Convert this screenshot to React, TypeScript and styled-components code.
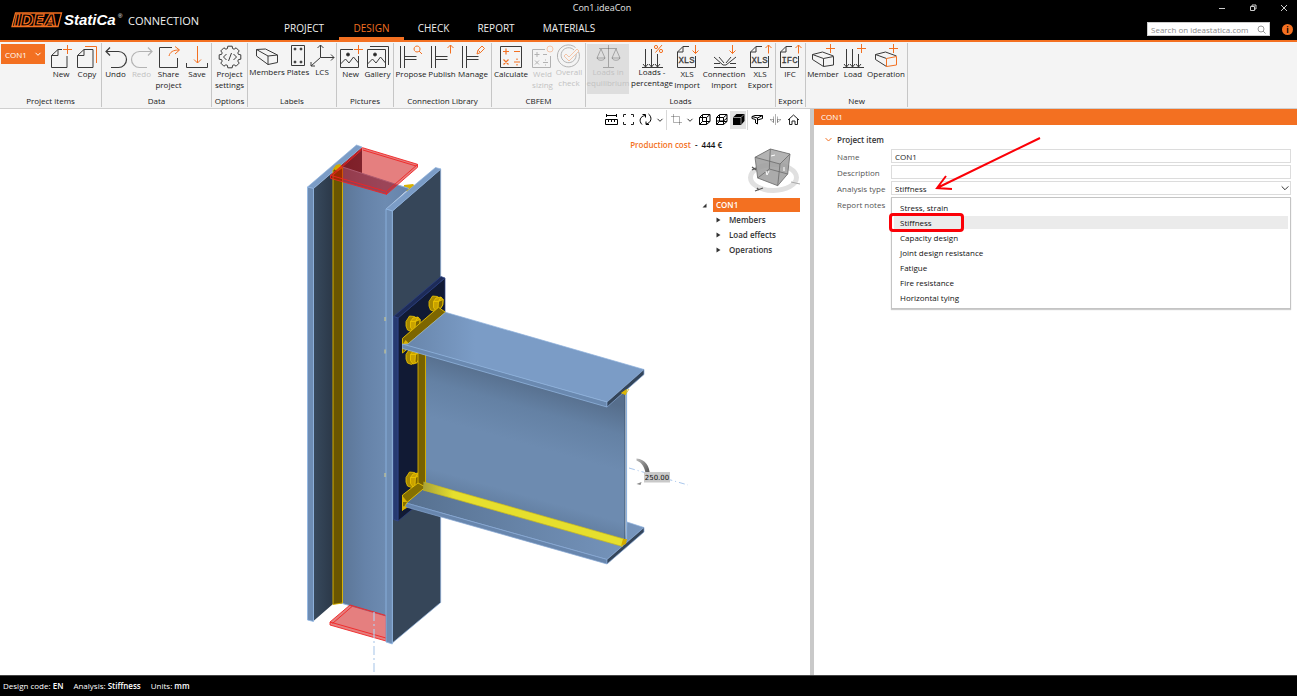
import React from 'react';
import styled, { createGlobalStyle } from 'styled-components';

const ORANGE = '#f37021';
const INK = '#3a3a3a';
const RED = '#fb0007';

const GlobalStyle = createGlobalStyle`
  * { box-sizing: border-box; }
  body { margin: 0; background: #fff; }
  body, button, input, select {
    font-family: 'Open Sans', 'Noto Sans', sans-serif;
    font-size: 8px;
    line-height: 11px;
    color: #1a1a1a;
  }
  button { border: 0; padding: 0; margin: 0; background: none; cursor: pointer; }
  ul { list-style: none; margin: 0; padding: 0; }
  svg { display: block; overflow: visible; }
`;

const Page = styled.div`
  display: flex;
  flex-direction: column;
  min-height: 100vh;
`;

/* ---------- header ---------- */
const Header = styled.header`
  display: grid;
  grid-template-columns: 269px 1fr 362px;
  height: 42px;
  background: #000;
  border-bottom: 2px solid ${ORANGE};
  color: #fff;
`;
const Brand = styled.div`
  display: flex;
  align-items: center;
  gap: 6px;
  padding-left: 11px;
  font-size: 11px;
  color: #f0f0f0;
`;
const Center = styled.div`
  display: flex;
  flex-direction: column;
  justify-content: space-between;
`;
const DocTitle = styled.div`
  text-align: center;
  font-size: 9px;
  line-height: 16px;
  color: #e4e4e4;
`;
const Tabs = styled.nav`
  display: flex;
`;
const Tab = styled.a<{ $active?: boolean; $w: number }>`
  width: ${p => p.$w}px;
  height: 20px;
  text-align: center;
  text-decoration: none;
  font-size: 10px;
  line-height: 17px;
  color: ${p => (p.$active ? ORANGE : '#eee')};
  border-bottom: 3px solid ${p => (p.$active ? ORANGE : 'transparent')};
`;
const HeaderRight = styled.div`
  display: flex;
  flex-direction: column;
  align-items: flex-end;
`;
const WindowButtons = styled.div`
  display: flex;
  gap: 19px;
  height: 22px;
  padding: 2px 7px 0 0;
`;
const WindowButton = styled.button`
  width: 12px;
  height: 12px;
`;
const SearchRow = styled.div`
  display: flex;
  align-items: center;
  gap: 12px;
  padding-right: 4px;
`;
const SearchBox = styled.label`
  display: flex;
  align-items: center;
  width: 123px;
  height: 14px;
  background: #fff;
  border: 1px solid #ccc;
  padding: 0 3px;
  input {
    flex: 1;
    min-width: 0;
    border: 0;
    padding: 0;
    outline: 0;
    background: none;
  }
  input::placeholder { color: #8a8a8a; opacity: 1; }
`;
const InfoButton = styled.button`
  width: 11px;
  height: 11px;
  border-radius: 50%;
  background: ${ORANGE};
  color: #000;
  font-weight: 700;
  line-height: 11px;
`;

/* ---------- ribbon ---------- */
const Ribbon = styled.div`
  display: flex;
  height: 67px;
  padding: 1px 0;
  background: #f4f4f4;
  border-bottom: 1px solid #cfcfcf;
`;
const Group = styled.section<{ $w: number }>`
  display: flex;
  flex-direction: column;
  justify-content: space-between;
  flex: none;
  width: ${p => p.$w}px;
  border-right: 1px solid #c6c6c6;
`;
const GroupButtons = styled.div<{ $pad?: number }>`
  display: flex;
  padding: 1px 0 0 ${p => p.$pad || 0}px;
`;
const GroupName = styled.div`
  text-align: center;
  white-space: nowrap;
  line-height: 13px;
`;
const Tool = styled.button<{ $w: number; $tight?: boolean; $shade?: boolean }>`
  display: flex;
  flex-direction: column;
  align-items: center;
  flex: none;
  width: ${p => p.$w}px;
  height: 50px;
  white-space: nowrap;
  background: ${p => (p.$shade ? '#dedede' : 'none')};
  svg { height: ${p => (p.$tight ? 22 : 24)}px; width: 28px; flex: none; }
  &:disabled { color: #c2c2c2; cursor: default; }
`;
const ItemPicker = styled.button`
  display: flex;
  align-items: center;
  justify-content: space-between;
  flex: none;
  width: 44px;
  height: 20px;
  margin: 0 3px 0 1px;
  padding: 0 4px;
  background: ${ORANGE};
  color: #fff;
`;

/* ---------- work area ---------- */
const Work = styled.main`
  display: grid;
  grid-template-columns: minmax(0, 810fr) 4px minmax(0, 483fr);
  flex: 1;
`;
const Viewport = styled.section`
  display: grid;
  background: #fff;
  overflow: hidden;
  > * { grid-area: 1 / 1; }
`;
const Splitter = styled.div`
  background: #c9c9c9;
`;
const Overlay = styled.div`
  display: flex;
  flex-direction: column;
  align-items: flex-end;
  justify-self: end;
  align-self: start;
`;
const ViewTools = styled.div`
  display: flex;
  align-items: center;
  height: 21px;
  padding-right: 8px;
`;
const ViewTool = styled.button<{ $w: number; $on?: boolean }>`
  display: flex;
  justify-content: center;
  align-items: center;
  width: ${p => p.$w}px;
  height: 18px;
  background: ${p => (p.$on ? '#e3e3e3' : 'none')};
`;
const Divider = styled.i`
  width: 1px;
  height: 20px;
  margin: 0 1px;
  background: #d8d8d8;
`;
const CostRow = styled.div`
  display: flex;
  gap: 25px;
  padding: 8px 9px 0 0;
  font-weight: 600;
  line-height: 13px;
  color: #111;
  em { font-style: normal; color: ${ORANGE}; margin-right: 2px; }
  svg { margin-top: 9px; }
`;
const Tree = styled.ul`
  width: 98px;
  margin: -3px 10px 0 0;
  font-weight: 600;
  line-height: 15px;
  color: #333;
`;
const TreeRoot = styled.li`
  display: flex;
  align-items: center;
  gap: 6px;
  span { flex: 1; padding-left: 3px; background: ${ORANGE}; color: #fff; line-height: 14px; }
`;
const TreeRow = styled.li`
  display: flex;
  align-items: center;
  gap: 8px;
  padding-left: 14px;
`;

/* ---------- properties ---------- */
const Panel = styled.section`
  background: #fff;
`;
const PanelTitle = styled.h2`
  margin: 0;
  padding-left: 7px;
  font-size: 8px;
  font-weight: 400;
  line-height: 16px;
  color: #fff;
  background: ${ORANGE};
`;
const Form = styled.form`
  padding: 7px 6px 0 11px;
`;
const SectionTitle = styled.h3`
  display: flex;
  align-items: center;
  gap: 5px;
  margin: 0;
  font-size: 8px;
  font-weight: 600;
  line-height: 15px;
  color: #333;
`;
const Field = styled.div`
  position: relative;
  display: grid;
  grid-template-columns: 54px 1fr;
  align-items: center;
  height: 16px;
  margin-left: 12px;
  white-space: nowrap;
  label { color: #555; }
  &:first-of-type { margin-top: 1px; }
`;
const TextInput = styled.input`
  width: 100%;
  height: 14px;
  padding: 0 3px;
  border: 1px solid #dcdcdc;
  outline: 0;
  background: #fff;
`;
const SelectBox = styled.div`
  position: relative;
  svg { position: absolute; right: 2px; top: 3px; pointer-events: none; }
`;
const Select = styled.select`
  display: block;
  width: 100%;
  height: 14px;
  padding: 0 3px;
  border: 1px solid #dcdcdc;
  border-radius: 0;
  appearance: none;
  background: #fff;
`;
const Menu = styled.ul`
  position: absolute;
  z-index: 1;
  top: 16px;
  left: 0;
  right: 0;
  padding: 2px;
  background: #fff;
  border: 1px solid #c4c4c4;
  box-shadow: 0 1px 1px #ccc;
`;
const Option = styled.li<{ $on?: boolean }>`
  position: relative;
  padding-left: 6px;
  line-height: 13px;
  margin: 1px 0 2px;
  color: #111;
  background: ${p => (p.$on ? '#ebebeb' : 'none')};
`;
const RedFrame = styled.span`
  position: absolute;
  left: -5px;
  top: -3px;
  width: 75px;
  height: 19px;
  border: 3px solid ${RED};
  border-radius: 4px;
`;
const Arrow = styled.svg`
  && {
    position: absolute;
    right: auto;
    left: 44px;
    top: -46px;
  }
`;

const Status = styled.footer`
  display: flex;
  gap: 10px;
  height: 21px;
  padding-left: 3px;
  background: #000;
  border-top: 1px solid #444;
  color: #fff;
  line-height: 20px;
  b { font-weight: 600; }
`;

/* ---------- icons ---------- */
type IconProps = { children: React.ReactNode; faded?: boolean };
const Icon = ({ children, faded }: IconProps) => (
  <svg viewBox="0 0 28 24" width="28" height="24" preserveAspectRatio="xMidYMin slice" fill="none" stroke={INK} strokeWidth="1" opacity={faded ? 0.35 : 1} aria-hidden="true">
    {children}
  </svg>
);
const O = ({ d }: { d: string }) => <path d={d} stroke={ORANGE} />;
const plus = (x: number, y: number) => `M${x - 4} ${y + 0.5}h9M${x + 0.5} ${y - 4}v9`;
const DOWN = 'M22.500 1v8.500M19.500 6.500l3 3 3-3';
const UP = 'M22.500 9.500V1M19.500 4l3-3 3 3';

const gear = (() => {
  const pts: string[] = [];
  for (let i = 0; i < 8; i++) {
    const a = (i * Math.PI) / 4;
    [[-0.3, 8.8], [-0.2, 11], [0.2, 11], [0.3, 8.8]].forEach(([o, r]) =>
      pts.push(`${(14 + r * Math.cos(a + o)).toFixed(1)} ${(13 + r * Math.sin(a + o)).toFixed(1)}`));
  }
  return `M${pts.join('L')}Z`;
})();

const DOC = 'M15 5.500h-4l-6.500 6v12h15.500V12M11 5.500v6H4.500';
const LINES = 'M3.500 2v22M7.500 2v22M7.500 12.500h12M7.500 15.500h12';
const LOADS = 'M4 23.500h21M7.500 5v18M13.500 5v18M19.500 10v13M5 20l2.500 3 2.500-3M11 20l2.500 3 2.500-3M17 20l2.500 3 2.500-3';

const FileIcon = ({ text, arrow }: { text: string; arrow: string }) => (
  <Icon>
    <path d="M16 2.500h-6L4.500 8v15.500h18V12M10 2.500V8H4.500" />
    <text x="13.500" y="19" textAnchor="middle" fontFamily="Liberation Mono" fontSize="9" fill={INK} stroke={INK} strokeWidth=".3">{text}</text>
    <O d={arrow} />
  </Icon>
);
const BeamBox = ({ front = INK }: { front?: string }) => (
  <>
    <path d="M3.500 10.500l10-2.500 11 4M3.500 10.500v5l11 7M3.500 10.500l11 4" />
    <path d="M14.500 14.500l10-2v8.500l-10 1.500z" stroke={front} />
  </>
);
const icons = {
  newDoc: <Icon><path d={DOC} /><O d={plus(20, 5)} /></Icon>,
  copy: <Icon><path d="M11 5.500h9v18H4.500v-12zM11 5.500v6H4.500" /><O d="M12 2.500h11.500V19" /></Icon>,
  undo: <Icon><path strokeWidth="1.200" d="M4 7.500h12.500a8 8 0 0 1 0 16H9M8 3.500l-4 4 4 4" /></Icon>,
  redo: <Icon faded><path strokeWidth="1.200" d="M24 7.500H11.500a8 8 0 0 0 0 16H19M20 3.500l4 4-4 4" /></Icon>,
  share: <Icon><path d="M17 3.500H4.500v20h18V14" /><O d="M14 12c1-4 4-6 10-6M20 2.500l4.500 3.500-4.500 4" /></Icon>,
  save: <Icon><path d="M3.500 19v4.500h21V19" /><O d="M14.500 2v17M11 15.500l3.500 3.500 3.500-3.500" /></Icon>,
  gear: <Icon><path d={gear} strokeLinejoin="round" /><path d="M10.500 10L7.500 13l3 3M17.500 10l3 3-3 3M15.500 9l-3 8" /></Icon>,
  members: <Icon><path d="M3.500 5.500l9-.500L24.500 11v7.500l-9.500 2-11.500-8.500zM3.500 5.500L15 12v8.500M15 12l9.500-1" /></Icon>,
  plates: <Icon><path d="M7.500 1.500h13v20h-13z" />{[[11, 5], [17, 5], [11, 18], [17, 18]].map(([x, y]) => <circle key={`${x}-${y}`} cx={x} cy={y} r="1" fill={INK} />)}</Icon>,
  lcs: <Icon><path d="M12.500 1v12.500H26M12.500 13.500L3 22M9.500 4l3-3 3 3M23 10.500l3 3-3 3M3 18v4h4" /></Icon>,
  picNew: <Icon><path d="M16 5.500H3.500v18h18V12M3.500 20l5-5 3.500 4 4.500-6 5 6" /><circle cx="11" cy="10.500" r="1.500" fill="#222" /><O d={plus(21, 5)} /></Icon>,
  gallery: <Icon><path d="M3.500 5.500h18v18h-18zM6 2.500h18.500V21M3.500 20l5-5 3.500 4 4.500-6 5 6" /><circle cx="11" cy="10.500" r="1.500" fill="#222" /></Icon>,
  propose: <Icon><path d={LINES} /><O d="M20 2a3 3 0 1 0 .1 0M22 7l3 3" /></Icon>,
  publish: <Icon><path d={LINES} /><O d={UP} /></Icon>,
  manage: <Icon><path d={LINES} /><O d="M18 10l1-4 4-4 2.500 2.500-4 4zM19.500 6.500l2 2" /></Icon>,
  calculate: <Icon><path d="M3.500 2.500h21v21h-21z" /><path stroke={ORANGE} strokeWidth="1.200" d="M6 7.500h6M9 4.500v6M17 7.500h6M6.500 15.500l5 5M11.500 15.500l-5 5M17 18h6M20 14.500v1.500M20 20v1.500" /></Icon>,
  weld: <Icon faded><path d="M16 5.500H3.500v18h18V12M5.500 10.500h5M8 8v5M14 10.500h4M6 16.500l4 4M10 16.500l-4 4M14 18.500h5M16.500 15.500v1M16.500 20.500v1" /><circle cx="21" cy="5" r="3" stroke={ORANGE} /></Icon>,
  overall: <Icon faded><path d="M23.500 7.500a11 11 0 1 1-3-4M21 10a7.500 7.500 0 1 1-2-4" /><path stroke={ORANGE} d="M9 12l2-2 3 3 8-8 2 2L14 17z" /></Icon>,
  scales: <Icon faded><path d="M14.500 1v22M9 23.500h11M5 4.500h18M7 5l-4 9h8zM22 5l-4 9h8zM3 14c1 3 7 3 8 0M18 14c1 3 7 3 8 0" /></Icon>,
  loadsPct: <Icon><path d={LOADS} /><O d="M17.500 8.500L24 1" /><circle cx="18" cy="3" r="1.600" stroke={ORANGE} /><circle cx="23" cy="7" r="1.600" stroke={ORANGE} /></Icon>,
  connImport: <Icon><path d="M4 23.500h22M4 19.500h6M20 19.500h6M4 13l9 8h3l10-8M9 13l5 6M21 13l-5 6" /><O d={DOWN} /></Icon>,
  member: <Icon><BeamBox /><O d={plus(21, 4)} /></Icon>,
  load: <Icon><path d={LOADS} /><O d={plus(22, 4)} /></Icon>,
  operation: <Icon><BeamBox front={ORANGE} /><O d={plus(21, 4)} /></Icon>,
};

const Chevron = ({ color = '#333', s = 6 }: { color?: string; s?: number }) => (
  <svg width={s} height={s} viewBox="0 0 6 6" fill="none" stroke={color} aria-hidden="true"><path strokeWidth={6 / s} d="M.5 1.800L3 4.300l2.500-2.500" /></svg>
);

type ToolDef = { w: number; label: string[]; icon: React.ReactNode; disabled?: boolean; tight?: boolean; shade?: boolean };
type GroupDef = { name: string; w: number; pad?: number; picker?: boolean; tools: ToolDef[] };
const groups: GroupDef[] = [
  { name: 'Project items', w: 102, picker: true, tools: [
    { w: 26, label: ['New'], icon: icons.newDoc }, { w: 26, label: ['Copy'], icon: icons.copy }] },
  { name: 'Data', w: 110, tools: [
    { w: 27, label: ['Undo'], icon: icons.undo }, { w: 25, label: ['Redo'], icon: icons.redo, disabled: true },
    { w: 29, label: ['Share', 'project'], icon: icons.share }, { w: 28, label: ['Save'], icon: icons.save }] },
  { name: 'Options', w: 36, tools: [{ w: 35, label: ['Project', 'settings'], icon: icons.gear }] },
  { name: 'Labels', w: 89, tools: [
    { w: 38, label: ['Members'], icon: icons.members, tight: true }, { w: 24, label: ['Plates'], icon: icons.plates, tight: true },
    { w: 24, label: ['LCS'], icon: icons.lcs, tight: true }] },
  { name: 'Pictures', w: 57, tools: [{ w: 27, label: ['New'], icon: icons.picNew }, { w: 27, label: ['Gallery'], icon: icons.gallery }] },
  { name: 'Connection Library', w: 98, tools: [
    { w: 34, label: ['Propose'], icon: icons.propose }, { w: 28, label: ['Publish'], icon: icons.publish },
    { w: 34, label: ['Manage'], icon: icons.manage }] },
  { name: 'CBFEM', w: 94, tools: [
    { w: 38, label: ['Calculate'], icon: icons.calculate }, { w: 25, label: ['Weld', 'sizing'], icon: icons.weld, disabled: true },
    { w: 28, label: ['Overall', 'check'], icon: icons.overall, disabled: true, tight: true }] },
  { name: 'Loads', w: 190, pad: 1, tools: [
    { w: 42, label: ['Loads in', 'equilibrium'], icon: icons.scales, disabled: true, tight: true, shade: true },
    { w: 46, label: ['Loads -', 'percentage'], icon: icons.loadsPct, tight: true },
    { w: 24, label: ['XLS', 'Import'], icon: <FileIcon text="XLS" arrow={DOWN} /> },
    { w: 50, label: ['Connection', 'Import'], icon: icons.connImport },
    { w: 22, label: ['XLS', 'Export'], icon: <FileIcon text="XLS" arrow={UP} /> }] },
  { name: 'Export', w: 30, tools: [{ w: 28, label: ['IFC'], icon: <FileIcon text="IFC" arrow={UP} /> }] },
  { name: 'New', w: 102, tools: [
    { w: 34, label: ['Member'], icon: icons.member }, { w: 26, label: ['Load'], icon: icons.load },
    { w: 40, label: ['Operation'], icon: icons.operation }] },
];

const tabs = [['PROJECT', 70], ['DESIGN', 65], ['CHECK', 59], ['REPORT', 66], ['MATERIALS', 80]] as const;
const analysisTypes = ['Stress, strain', 'Stiffness', 'Capacity design', 'Joint design resistance', 'Fatigue', 'Fire resistance', 'Horizontal tying'];

const Logo = () => (
  <svg width="111" height="20" viewBox="0 0 111 20" role="img" aria-label="IDEA StatiCa">
    <path d="M4.500 3h46l-3.500 13.500H1z" fill="#000" stroke={ORANGE} strokeWidth="1.300" />
    <text x="3" y="15.500" fontFamily="DejaVu Sans" fontWeight="700" fontStyle="italic" fontSize="16" fill="#000" stroke={ORANGE} strokeWidth="1.200">IDEA</text>
    <text x="53" y="15" fontFamily="Liberation Sans" fontWeight="700" fontStyle="italic" fontSize="15" fill="#fff">StatiCa</text>
    <text x="107" y="8" fontFamily="Liberation Sans" fontSize="6" fill="#fff">®</text>
  </svg>
);

/* ---------- 3D model ---------- */
const Bolt = ({ x, y }: { x: number; y: number }) => (
  <g transform={`translate(${x} ${y})`} stroke="#f0c800" strokeWidth="0.800" strokeLinejoin="round">
    <path d="M-7-2.500L-3.500-8l5 .500 2.500 2-1 10-4.500 3-4-1.500-1.500-4z" fill="#a88900" />
    <path d="M-2.500-2.500L0-6l5-1 2.200 2.500-.5 5.500L3.500 6 0 7l-2.500-3.500z" fill="#c9a200" />
    <path d="M2.500-2.500L7-4.500l-.3 5.500L3.500 6 2 5z" fill="#7d6500" />
    <path d="M-2.500-2.500l5 0M2.500-2.500L5-7" fill="none" />
  </g>
);

const Model = () => (
  <svg width="700" height="566" viewBox="0 109 700 566" role="img" aria-label="3D view of the beam to column connection">
    <defs>
      <linearGradient id="web" x1="0" x2="1"><stop offset="0" stopColor="#5c7697" /><stop offset=".35" stopColor="#6683a9" /><stop offset=".65" stopColor="#6d8bb1" /><stop offset="1" stopColor="#6683ab" /></linearGradient>
      <linearGradient id="inner" x1="0" x2="1"><stop offset="0" stopColor="#384a5e" /><stop offset=".4" stopColor="#2b3848" /><stop offset="1" stopColor="#354558" /></linearGradient>
      <linearGradient id="beamWeb" gradientUnits="userSpaceOnUse" x1="530" y1="380" x2="492" y2="515"><stop offset="0" stopColor="#566e8c" /><stop offset=".2" stopColor="#6481a4" /><stop offset=".45" stopColor="#6d8bb0" /><stop offset=".8" stopColor="#6d8bb0" /><stop offset="1" stopColor="#5d7899" /></linearGradient>
      <linearGradient id="top" x1="0" x2=".3"><stop offset="0" stopColor="#6784a9" /><stop offset="1" stopColor="#7b9cc6" /></linearGradient>
      <linearGradient id="bottom" x1="0" x2="1"><stop offset="0" stopColor="#56708f" /><stop offset=".5" stopColor="#6784a8" /><stop offset="1" stopColor="#7796be" /></linearGradient>
      <linearGradient id="seam" x1="0" x2=".15"><stop offset="0" stopColor="#a9a238" /><stop offset="1" stopColor="#e6df2d" /></linearGradient>
      <linearGradient id="arc" x1="0" x2="1" y2="1"><stop offset="0" stopColor="#bbb" /><stop offset="1" stopColor="#444" /></linearGradient>
    </defs>

    {/* column */}
    <g strokeLinejoin="round">
      <path d="M313.500 188.500L362 147v80h-20v376.500l-9 .500-19.500 17z" fill="url(#inner)" />
      <path d="M307.500 187L356.500 145l5.500 2-48.500 41.500z" fill="#7b9cc6" stroke="#8fb2dc" strokeWidth=".7" />
      <path d="M307.500 187l6 1.500V621.500l-6-1.500z" fill="#6d8cb3" stroke="#8fb6e4" strokeWidth=".8" />
      <path d="M404 188v-3l9-1 3 3-8 6z" fill="#d9b200" />
      <path d="M342.500 167L409 188.500 386 209V616l-43.500-12.500z" fill="url(#web)" />
      <path d="M342.500 167L409 188.500M342.500 603.500L386 616" stroke="#8fb2dc" strokeWidth="1" />
      <path d="M333 170l5-5 4.500 3v435l-9.500 1.500z" fill="#6a5600" stroke="#e0b800" strokeWidth=".9" />
      <path d="M333 169l3-4 4-1 3 4-5 3z" fill="#d2aa00" />
    </g>

    {/* cut planes and axis of the column */}
    <g stroke="#f02424" strokeWidth=".9" strokeLinejoin="round">
      <path d="M362.500 147.700l55 16.600v3l-31 27-56-16v-3z" fill="#c00" fillOpacity=".5" />
      <path d="M330.500 175.300l56 16.200 31-27M386.500 191.500v3M361.500 150l-28 24.500M363 150l53 16" fill="none" />
      <path d="M350 605l36 10.500V641l-56-16v-3z" fill="#c00" fillOpacity=".5" />
      <path d="M330 622l56 16M352 606.500l-19.500 17" fill="none" />
    </g>
    <path d="M374 612V675" stroke="#b4cdec" strokeWidth="1.200" strokeDasharray="9 3 2 3" />

    {/* front flange */}
    <path d="M392.300 211L440.700 169V602.500L392.300 643z" fill="#364659" stroke="#8fb2dc" strokeWidth=".7" />
    <path d="M386 209l49.500-41.500 5.500 1.500-48.500 42z" fill="#7b9cc6" stroke="#8fb2dc" strokeWidth=".7" />
    <path d="M386 209l6.300 2V644l-6.300-2z" fill="#6d8cb3" stroke="#8fb6e4" strokeWidth=".8" />
    <path d="M385 317v4M385 349.500v4M385 473v4" stroke="#d9d08a" strokeWidth="1" />

    {/* end plate */}
    <path d="M398 318l47-40v204l-47 39z" fill="#111a34" stroke="#2d4182" strokeWidth=".7" />
    <path d="M393.500 316.500L441 276.500l4 1.500-47 40z" fill="#1d2b58" stroke="#2d4182" strokeWidth=".7" />
    <path d="M393.500 316.500l4.500 1.500v203l-4.500-1.500z" fill="#263a70" stroke="#34498c" strokeWidth=".7" />
    <Bolt x={436} y={304} />
    <Bolt x={413} y={324} />
    <Bolt x={413} y={357} />
    <Bolt x={413} y={480} />

    {/* beam */}
    <path d="M402.500 502l21-17 202 56 1.500-19 17 5.500-37 32z" fill="url(#bottom)" stroke="#8fb2dc" strokeWidth=".7" />
    <path d="M402.500 502L607 559.500v4.500l-204.500-58z" fill="#6886ad" stroke="#86a8d4" strokeWidth=".7" />
    <path d="M607 559.500l37-32v4.500l-37 32z" fill="#34455a" stroke="#86a8d4" strokeWidth=".7" />
    <path d="M425 352l182 54 18-15V541L425 485z" fill="url(#beamWeb)" />
    <path d="M625 391V541" stroke="#3f5674" strokeWidth="1" />
    <path d="M626.500 390V541" stroke="#8fb2dc" strokeWidth="1.200" />
    <path d="M418 349l7.500 3V488l-7.500-3z" fill="#776100" stroke="#d9b200" strokeWidth=".9" />
    <path d="M402.500 495l15.500-12 7.500 4-18.500 15.500-4.500 8z" fill="#857000" stroke="#e8c200" strokeWidth=".9" />
    <path d="M402.500 496l5 6h-5zM402.500 506l5 1.500-5 3z" fill="#d9b200" />
    <path d="M423.500 482l200.500 57-1.500 7.500L423 490z" fill="url(#seam)" />
    <path d="M423.500 482l200.500 57M423 490l199.500 56.500" fill="none" stroke="#c8b820" strokeWidth=".7" />
    <path d="M621 546l2-7h4l-1 5z" fill="#d2aa00" />

    <path d="M402.500 338.300l36-31 7 5L408 344l-5.500.500zM402.500 348h6l-6 5z" fill="#7d6600" stroke="#e8c200" strokeWidth=".9" />
    <path d="M402.500 345l3-5 4 4z" fill="#d9b200" />
    <path d="M408 344L445.500 312.300 644 369.500 607 402 402.500 344.500z" fill="url(#top)" stroke="#8fb2dc" strokeWidth=".7" />
    <path d="M402.500 344L607 402v5L402.500 348.500z" fill="#6a89b0" stroke="#8fb2dc" strokeWidth=".8" />
    <path d="M607 402l37-32.500v5L607 407z" fill="#34455a" stroke="#86a8d4" strokeWidth=".7" />
    <path d="M621.500 393l5-3.500-1 5zM625 395l4-6" fill="#e0b800" stroke="#e0b800" strokeWidth=".8" />

    {/* rotation mark and dimension */}
    <path d="M629 468l59 17" stroke="#9fc0ea" strokeWidth=".9" strokeDasharray="6 3 1 3" />
    <path d="M636.500 458.500c9 1 13 7 13.500 17h-4c-1-8-4-13-9.500-15z" fill="url(#arc)" />
    <path d="M636.500 484l5-2-1 3z" fill="#888" />
    <path d="M644 472h26v10.500h-26z" fill="#c9c9c9" />
    <text x="657" y="480" textAnchor="middle" fontFamily="DejaVu Sans" fontSize="7" fill="#111">250.00</text>
  </svg>
);

const NavCube = () => (
  <svg width="54" height="54" viewBox="0 0 54 54" role="img" aria-label="View cube">
    <ellipse cx="26.500" cy="30.500" rx="23" ry="13" fill="none" stroke="#e0e0e0" strokeWidth="5" />
    <path d="M8 10.300L23.300 2 43 7l-2.300 20-10 11.700-20-7.700z" fill="#9c9c9c" fillOpacity=".85" />
    <path d="M8 10.300L33 17l10-10L23.300 2z" fill="#b4b4b4" />
    <path d="M8 10.300L23.300 2 43 7l-2.300 20-10 11.700-20-7.700zM8 10.300L33 17l10-10M33 17l-2.300 21.700M23.300 2l-1 20-11.600 9M22.300 22l18.400 5" fill="none" stroke="#6a6a6a" strokeWidth=".8" />
    <path d="M24 9l4-1M19 24l1 4 2-4M37 20v4" stroke="#fff" fill="none" />
    <path d="M5 20l4 3M5 23l4-2M8 44l8-3M10 41l2 2" stroke="#555" fill="none" strokeWidth="1.200" />
    <path d="M44 35l9 2" stroke="#aaa" />
  </svg>
);

const Glyph = ({ d, faded, dark }: { d: string; faded?: boolean; dark?: boolean }) => (
  <svg width="13" height="13" viewBox="0 0 13 13" fill="none" stroke={dark ? '#000' : '#222'} opacity={faded ? 0.35 : 1} aria-hidden="true"><path d={d} /></svg>
);
const CUBE = 'M1.500 4.500h7v7h-7zM1.500 4.500l3-3h7.500v7l-3.500 3M8.500 4.500L12 1.500';
const TRI_OPEN = <svg width="5" height="5" viewBox="0 0 5 5" aria-hidden="true"><path d="M4.500.5v4h-4z" fill="#333" /></svg>;
const TRI = <svg width="5" height="6" viewBox="0 0 5 6" aria-hidden="true"><path d="M.5.5L4.500 3 .5 5.500z" fill="#333" /></svg>;

export default function App() {
  return (
    <Page>
      <GlobalStyle />
      <Header>
        <Brand><Logo /><span>CONNECTION</span></Brand>
        <Center>
          <DocTitle>Con1.ideaCon</DocTitle>
          <Tabs>
            {tabs.map(([t, w]) => <Tab key={t} href="#" $w={w} $active={t === 'DESIGN'}>{t}</Tab>)}
          </Tabs>
        </Center>
        <HeaderRight>
          <WindowButtons>
            {[['Minimize', 'M3 6.500h6'], ['Restore', 'M3.500 4.500h4v4h-4zM5 4.500V3h4v4H7.500'], ['Close', 'M3 3l6 6M9 3L3 9']].map(([n, d]) => (
              <WindowButton key={n} aria-label={n}>
                <svg width="12" height="12" viewBox="0 0 12 12" fill="none" stroke="#ccc"><path d={d} /></svg>
              </WindowButton>
            ))}
          </WindowButtons>
          <SearchRow>
            <SearchBox>
              <input type="text" aria-label="Search" placeholder="Search on ideastatica.com" />
              <svg width="9" height="9" viewBox="0 0 9 9" fill="none" stroke="#999"><circle cx="4" cy="4" r="3" /><path d="M6 6l2.500 2.500" /></svg>
            </SearchBox>
            <InfoButton aria-label="Information">i</InfoButton>
          </SearchRow>
        </HeaderRight>
      </Header>

      <Ribbon>
        {groups.map((g, i) => (
          <Group key={i} $w={g.w}>
            <GroupButtons $pad={g.pad}>
              {g.picker && <ItemPicker>CON1<Chevron color="#fff" /></ItemPicker>}
              {g.tools.map((t, j) => (
                <Tool key={j} $w={t.w} $tight={t.tight} $shade={t.shade} disabled={t.disabled}>
                  {t.icon}
                  {t.label.map(l => <span key={l}>{l}</span>)}
                </Tool>
              ))}
            </GroupButtons>
            <GroupName>{g.name}</GroupName>
          </Group>
        ))}
      </Ribbon>

      <Work>
        <Viewport>
          <Model />
          <Overlay>
            <ViewTools>
              <ViewTool $w={18} aria-label="Dimensions"><Glyph dark d="M1 2.500h11M1.500 1v3M11.500 1v3M.5 6.500h12v5H.5zM3.500 7v2M6.500 7v2M9.500 7v2" /></ViewTool>
              <ViewTool $w={17} aria-label="Zoom to fit"><Glyph d="M1.500 4V1.500H4M11.500 4V1.500H9M1.500 9v2.500H4M11.500 9v2.500H9" /></ViewTool>
              <ViewTool $w={17} aria-label="Rotate"><Glyph dark d="M3 11.500C-.5 8 1 3 6.500 2.500M3.500 1.500h3v3M9.500 1c4 3 3 9-2.500 10M10 11.500H7v-3" /></ViewTool>
              <ViewTool $w={11} aria-label="Rotate options"><Chevron /></ViewTool>
              <Divider />
              <ViewTool $w={16} aria-label="Crop"><Glyph faded d="M3.500 1v8.500H12M1 3.500h8.500V12" /></ViewTool>
              <ViewTool $w={11} aria-label="Crop options"><Chevron /></ViewTool>
              <ViewTool $w={18} aria-label="Wireframe"><Glyph dark d={`${CUBE}M4.500 2v6.500H12M4.500 8.500l-3 3`} /></ViewTool>
              <ViewTool $w={17} aria-label="Transparent"><Glyph dark d={`${CUBE}M4.500 2v6.500H12M4.500 8.500l-3 3M2 8h6.500L12 5`} /></ViewTool>
              <ViewTool $w={16} $on aria-label="Solid">
                <svg width="13" height="13" viewBox="0 0 13 13"><path d="M1 4.500l3.500-3.500H12.500v7L9 12H1z" /><path d="M1.500 4.500H9v7M9 4.500L12 1.500" stroke="#eee" strokeWidth=".6" fill="none" /></svg>
              </ViewTool>
              <Divider />
              <ViewTool $w={17} aria-label="Section"><Glyph dark d="M1 3.500l3-1h7.500v3L6.500 7v4l-2-1V6.500L1 5.500zM1 3.500l5.500 1.500v2M6.500 5l5-2.500" /></ViewTool>
              <ViewTool $w={18} aria-label="Mirror"><Glyph faded d="M6.500 1v11M1 6.500h3.500v3zM12 6.500H8.500v3zM4.500 3.500v6M8.500 3.500v6" /></ViewTool>
              <ViewTool $w={18} aria-label="Home view"><Glyph d="M1 7l5.500-5L12 7M2.500 6v5.500H5V8h3v3.500h2.500V6" /></ViewTool>
            </ViewTools>
            <CostRow>
              <span><em>Production cost</em> - &nbsp;444 €</span>
              <NavCube />
            </CostRow>
            <Tree>
              <TreeRoot>{TRI_OPEN}<span>CON1</span></TreeRoot>
              {['Members', 'Load effects', 'Operations'].map(t => <TreeRow key={t}>{TRI}{t}</TreeRow>)}
            </Tree>
          </Overlay>
        </Viewport>
        <Splitter />
        <Panel>
          <PanelTitle>CON1</PanelTitle>
          <Form>
            <SectionTitle><Chevron color={ORANGE} s={7} />Project item</SectionTitle>
            <Field><label htmlFor="name">Name</label><TextInput id="name" defaultValue="CON1" /></Field>
            <Field><label htmlFor="desc">Description</label><TextInput id="desc" /></Field>
            <Field>
              <label htmlFor="analysis">Analysis type</label>
              <SelectBox>
                <Select id="analysis" defaultValue="Stiffness">
                  {analysisTypes.map(a => <option key={a}>{a}</option>)}
                </Select>
                <Chevron s={8} />
                <Menu role="listbox" aria-label="Analysis type">
                  {analysisTypes.map(a => (
                    <Option key={a} role="option" aria-selected={a === 'Stiffness'} $on={a === 'Stiffness'}>
                      {a}{a === 'Stiffness' && <RedFrame />}
                    </Option>
                  ))}
                </Menu>
                <Arrow width="106" height="56" viewBox="0 0 106 56" fill="none" stroke={RED} strokeWidth="2">
                  <path d="M105 3L2 53M11 41L2 53l15 1" />
                </Arrow>
              </SelectBox>
            </Field>
            <Field><label>Report notes</label></Field>
          </Form>
        </Panel>
      </Work>

      <Status>
        <span>Design code: <b>EN</b></span>
        <span>Analysis: <b>Stiffness</b></span>
        <span>Units: <b>mm</b></span>
      </Status>
    </Page>
  );
}
